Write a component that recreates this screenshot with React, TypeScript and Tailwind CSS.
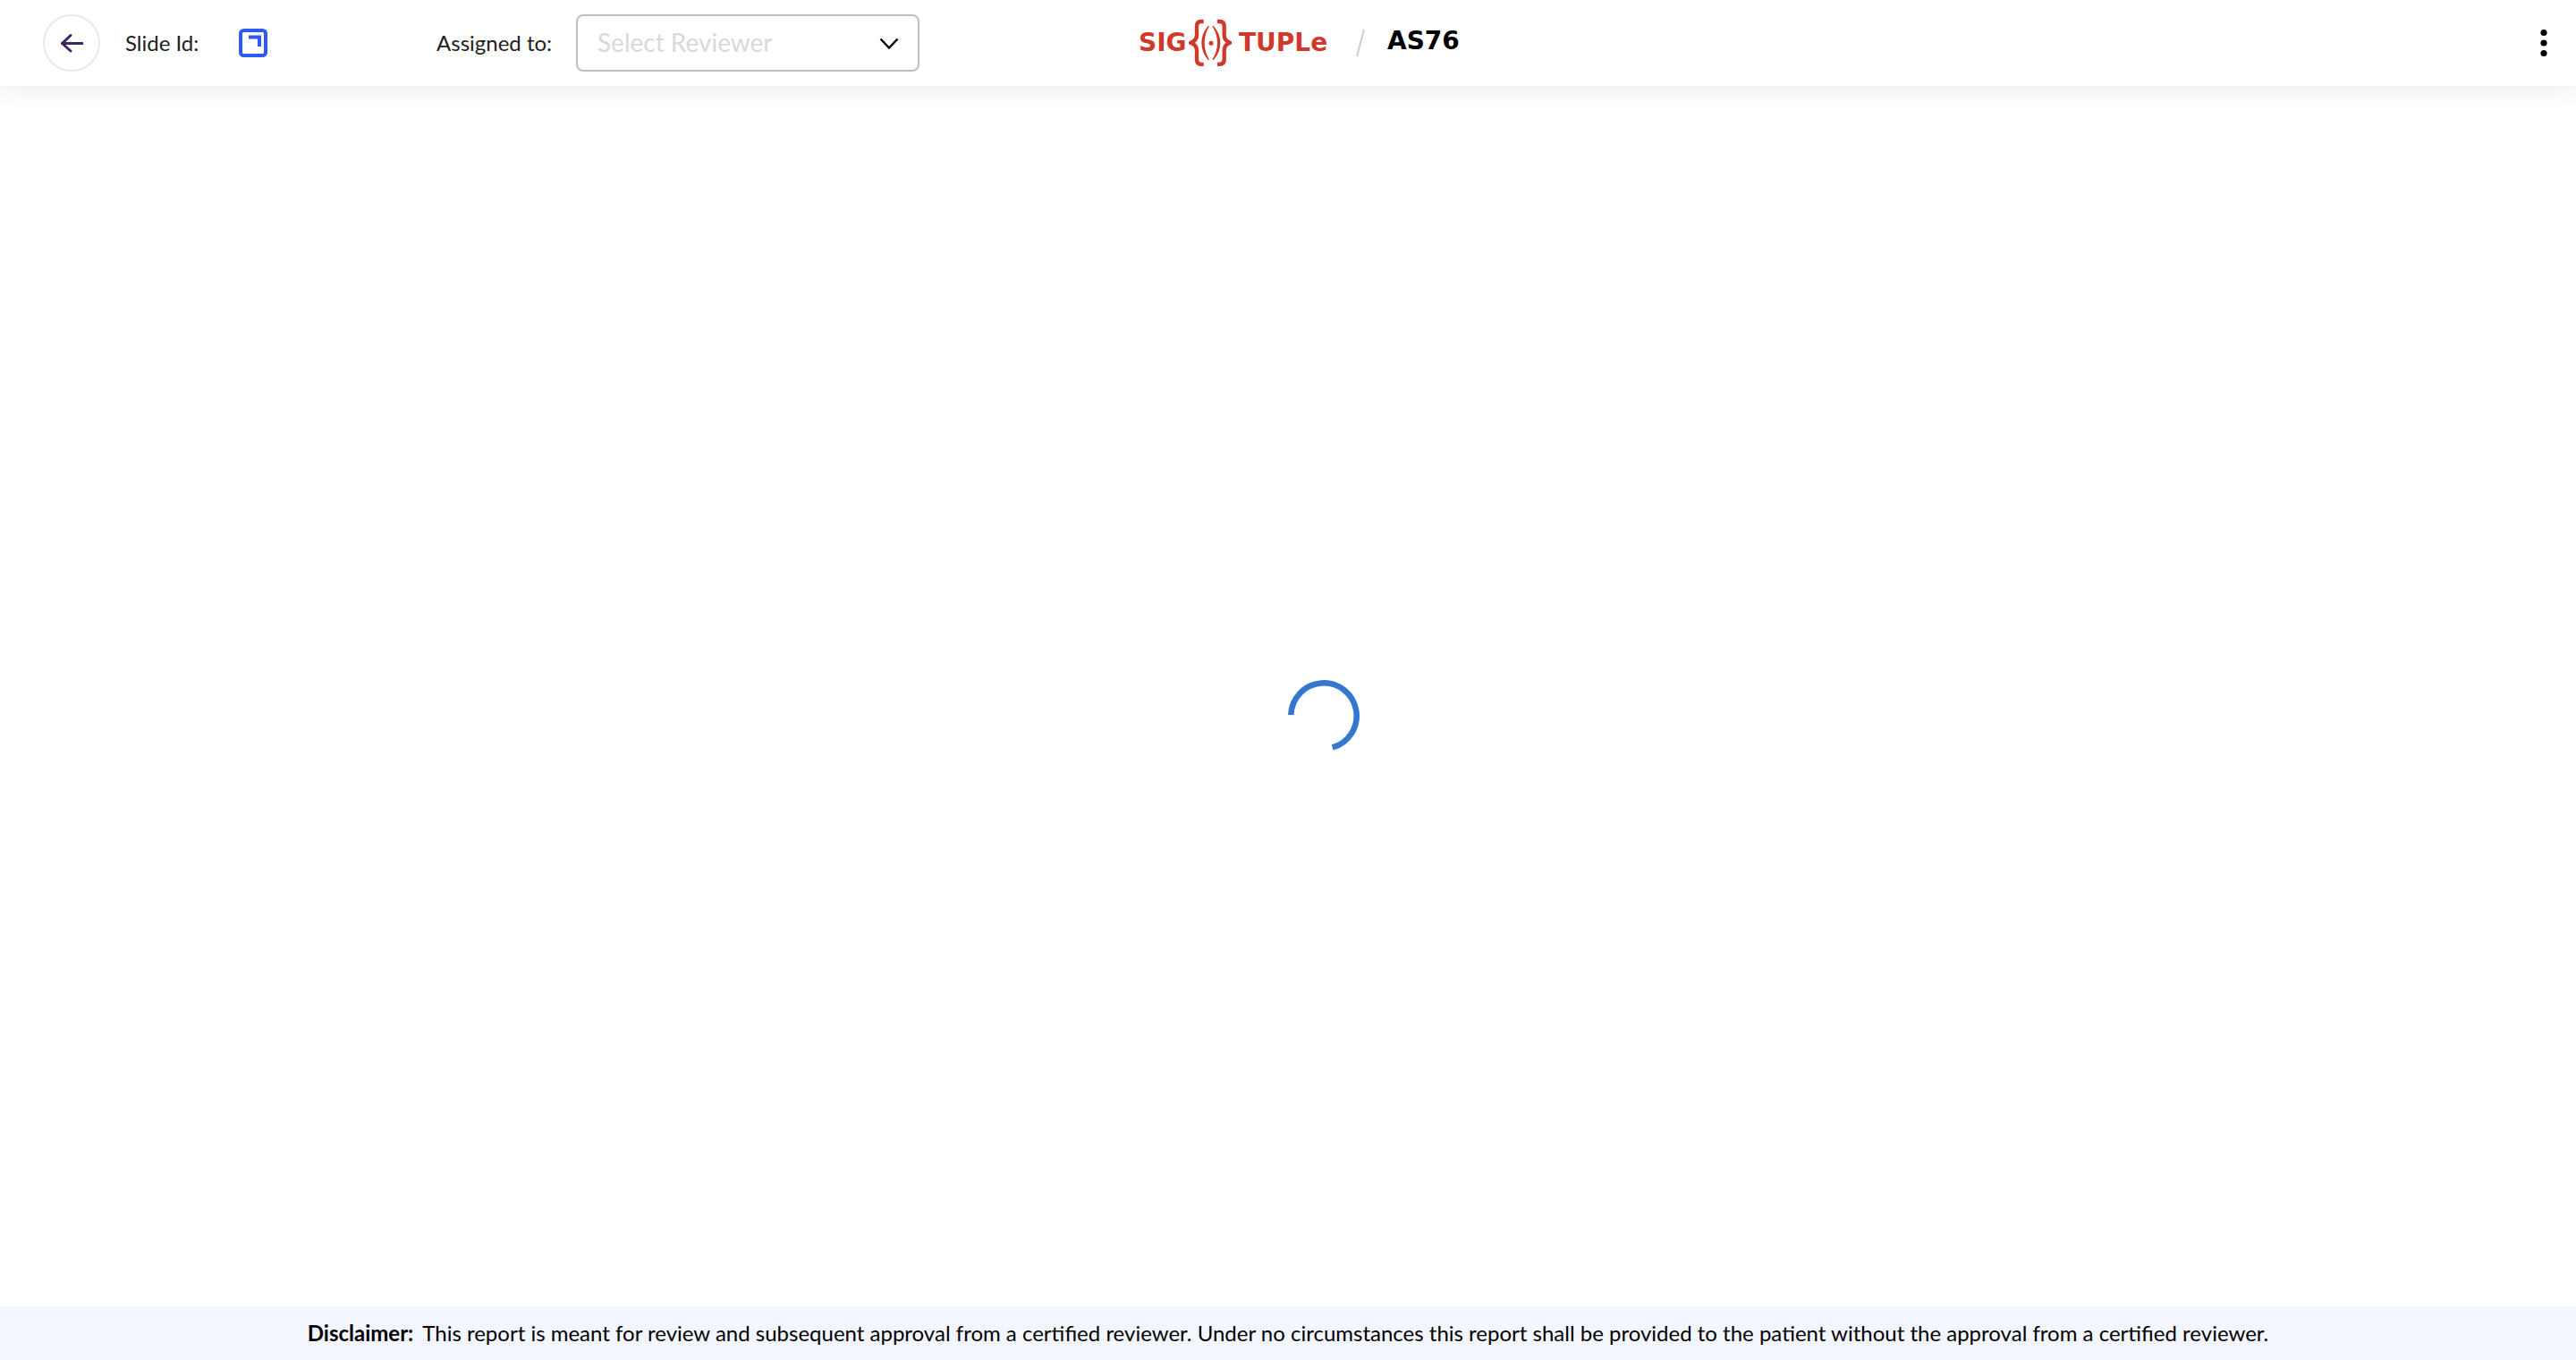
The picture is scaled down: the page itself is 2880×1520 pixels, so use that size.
import React from "react";

function BackArrow() {
  return (
    <svg viewBox="0 0 26 22" className="h-[22px] w-[26px]" fill="none" stroke="#3b2563" strokeWidth="3" strokeLinecap="round" strokeLinejoin="round" aria-hidden="true">
      <path d="M2.500 11.500H25" />
      <path d="M12 2.500L2.500 11.500L12 20" />
    </svg>
  );
}

function SlideIcon() {
  return (
    <svg viewBox="0 0 32 32" className="size-8" fill="none" stroke="#2f5bf5" strokeWidth="4" aria-hidden="true">
      <rect x="2" y="2" width="28" height="28" rx="3.5" />
      <path d="M11 9.5H23V20" />
    </svg>
  );
}

function BraceMark() {
  return (
    <svg viewBox="240 60 144 168" className="h-14 w-12" aria-hidden="true">
      <g fill="none" stroke="#d0382c" strokeWidth="13">
        <path d="M290 72H281Q267 72 267 88V118Q267 136 247 143.500Q267 151 267 169V199Q267 215.500 281 215.500H290" />
        <path d="M336 72H344Q359 72 359 88V118Q359 136 378 143.500Q359 151 359 169V199Q359 215.500 344 215.500H336" />
      </g>
      <g fill="#d0382c">
        <path d="M305 87Q283 112 283 144Q283 176 305 201L309 200Q293 174 293 144Q293 114 309 88Z" />
        <path d="M323 87Q346 112 346 144Q346 176 323 201L319 200Q336 174 336 144Q336 114 319 88Z" />
        <circle cx="315" cy="145" r="7.500" />
      </g>
    </svg>
  );
}

function Header() {
  return (
    <header className="relative grid h-24 grid-cols-[1fr_auto_1fr] items-center bg-white px-5 shadow-[0_4px_24px_rgba(0,0,0,0.08)]">
      <div className="flex items-center pl-7 text-2xl text-[#212121]">
        <button type="button" aria-label="Back" className="flex size-16 items-center justify-center rounded-full border-2 border-[#e9e9e9]">
          <BackArrow />
        </button>
        <span className="ml-7 w-[127px]">Slide Id:</span>
        <button type="button" aria-label="Open slide">
          <SlideIcon />
        </button>
        <label htmlFor="reviewer" className="ml-[189px] w-39">
          Assigned to:
        </label>
        <div className="relative w-96">
          <select
            id="reviewer"
            defaultValue=""
            className="h-16 w-full appearance-none rounded-lg border-2 border-[#bfbfbf] bg-white px-[22px] text-[28px] text-[#d9d9d9]"
          >
            <option value="">Select Reviewer</option>
          </select>
          <svg viewBox="0 0 22 14" className="pointer-events-none absolute top-[26px] right-[23px] h-[14px] w-[22px]" fill="none" stroke="#000" strokeWidth="2.500" aria-hidden="true">
            <path d="M1.500 1.500L11 11.500L20.500 1.500" />
          </svg>
        </div>
      </div>
      <div className="flex items-center pl-8 font-['DejaVu_Sans',sans-serif] text-[28px] leading-8 font-bold">
        <div className="flex items-center text-[#d0382c]">
          <span className="w-14">SIG</span>
          <BraceMark />
          <span className="w-[114px] pl-2">TUPLe</span>
        </div>
        <svg viewBox="0 0 12 32" className="mx-6 h-8 w-3" stroke="#cccccc" strokeWidth="2" aria-hidden="true">
          <path d="M2 31L10 1" />
        </svg>
        <span className="w-[88px] pb-1 text-black">AS76</span>
      </div>
      <button type="button" aria-label="More options" className="flex w-8 justify-center justify-self-end">
        <svg viewBox="0 0 8 32" className="h-8 w-2" aria-hidden="true">
          <circle cx="4" cy="4.500" r="3.600" />
          <circle cx="4" cy="16" r="3.600" />
          <circle cx="4" cy="27.500" r="3.600" />
        </svg>
      </button>
    </header>
  );
}

function Spinner() {
  return (
    <svg viewBox="0 0 80 80" className="size-20" role="status" aria-label="Loading">
      <path d="M3.300 39A36.700 36.700 0 1 1 49.700 75.400" fill="none" stroke="#3576cf" strokeWidth="6.500" />
    </svg>
  );
}

export default function App() {
  return (
    <div className="flex min-h-screen flex-col bg-white font-[Lato,sans-serif]">
      <Header />
      <main className="flex flex-1 items-center justify-center pt-11 pl-20">
        <Spinner />
      </main>
      <footer className="flex h-15 items-center justify-center gap-2.5 bg-[#f3f6ff] text-2xl text-black">
        <strong className="font-bold">Disclaimer:</strong>
        <p>
          This report is meant for review and subsequent approval from a certified reviewer. Under no circumstances this report shall be provided to the patient without the approval from a certified reviewer.
        </p>
      </footer>
    </div>
  );
}
